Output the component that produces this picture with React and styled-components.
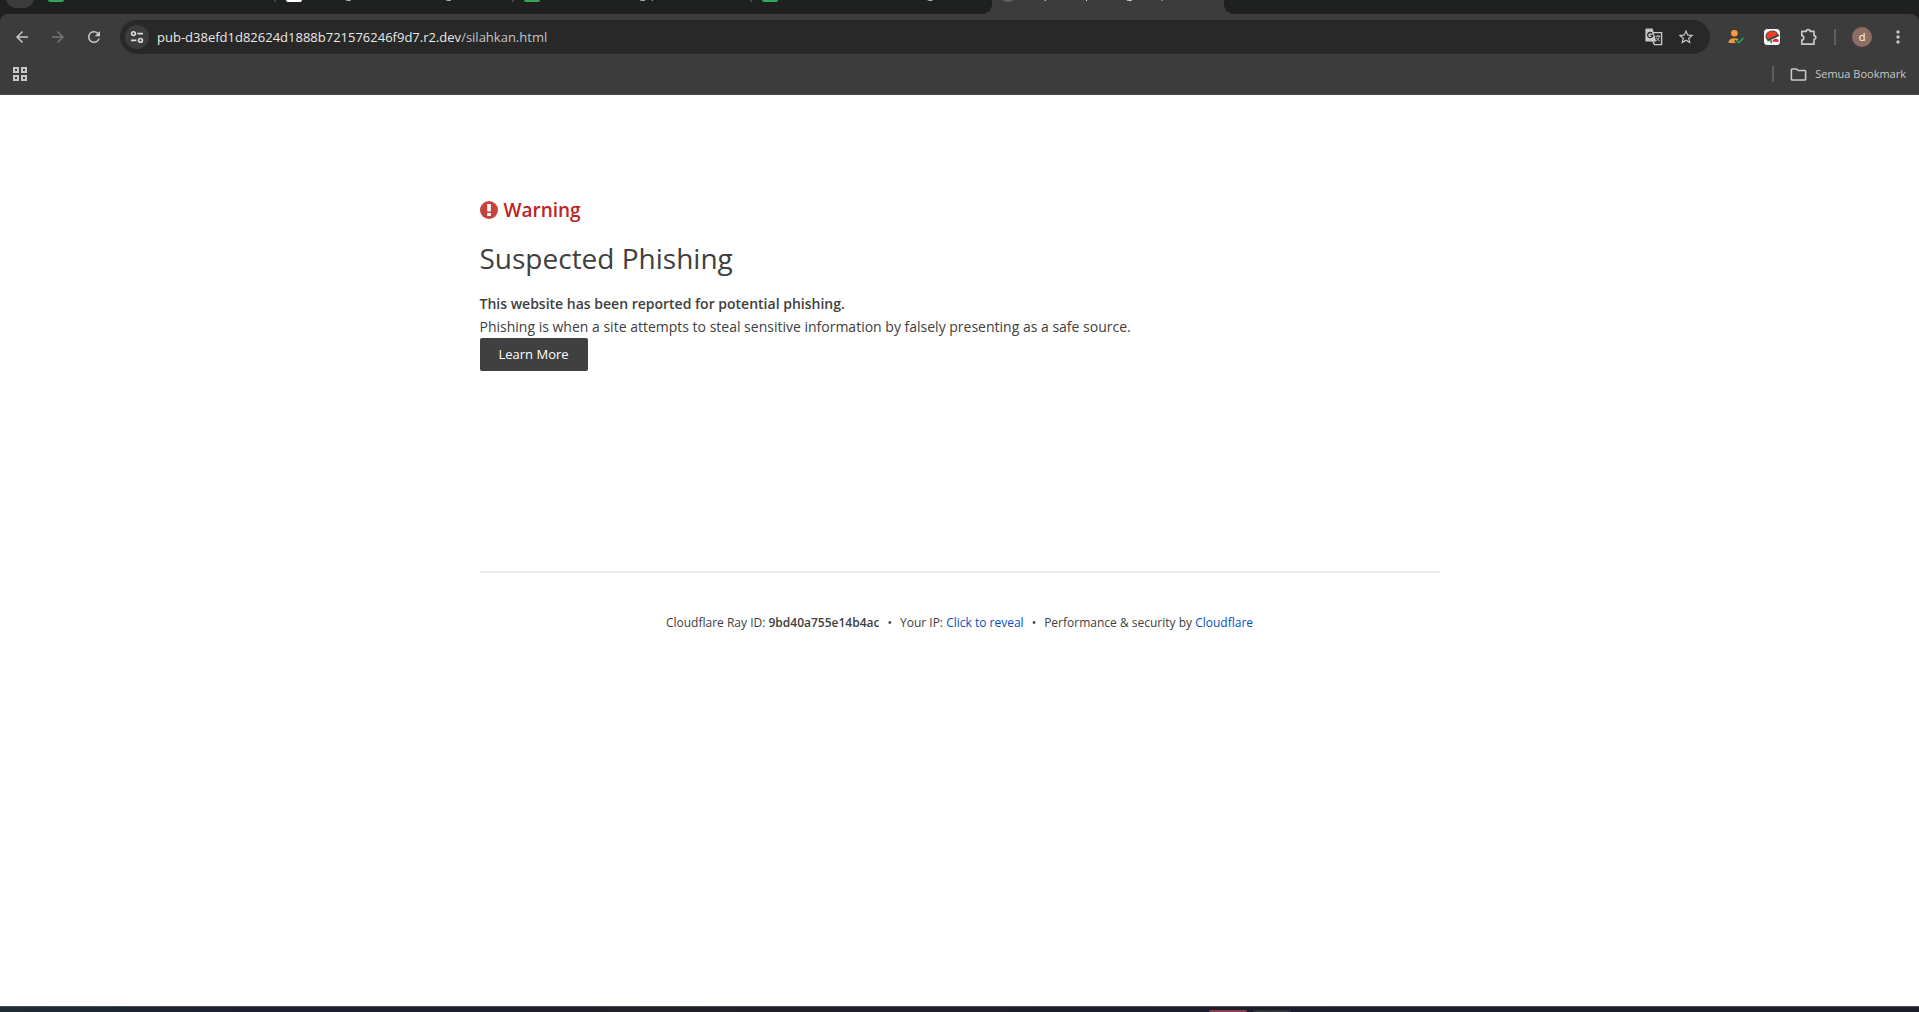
import React, { useState } from 'react';
import styled, { ThemeProvider, createGlobalStyle } from 'styled-components';
import {
  MdArrowBack,
  MdArrowForward,
  MdRefresh,
  MdStarBorder,
  MdOutlineFolder,
  MdMoreVert
} from 'react-icons/md';

const theme = {
  fonts: {
    ui: '"Open Sans", "Noto Sans", sans-serif'
  },
  colors: {
    frame: '#1f2120',
    toolbar: '#3c3c3c',
    field: '#282828',
    icon: '#c7c7c7',
    iconDim: '#757575',
    divider: '#5f5f5f',
    text: '#404040',
    danger: '#bd2426',
    link: '#0051c3',
    rule: '#ebebeb',
    white: '#ffffff'
  }
};

const GlobalStyle = createGlobalStyle`
  * {
    box-sizing: border-box;
  }

  body {
    margin: 0;
    background: #ffffff;
  }
`;

const Screen = styled.div`
  display: flex;
  flex-direction: column;
  height: 100vh;
  overflow: hidden;
  font-family: ${props => props.theme.fonts.ui};
`;

// Browser frame
const TabStrip = styled.div`
  display: flex;
  align-items: flex-end;
  height: 14px;
  flex-shrink: 0;
  padding-left: 6px;
  overflow: hidden;
  background: ${props => props.theme.colors.frame};
`;

const TabSearch = styled.button`
  width: 28px;
  height: 28px;
  flex-shrink: 0;
  margin: 0 6px 6px 0;
  padding: 0;
  border: none;
  border-radius: 10px;
  background: ${props => props.theme.colors.toolbar};
`;

const Tab = styled.button`
  position: relative;
  display: flex;
  align-items: flex-end;
  gap: 8px;
  width: ${props => props.$active ? 232 : 238}px;
  height: 28px;
  flex-shrink: 0;
  padding: 0 32px 12px 8px;
  border: none;
  background: ${props => props.$active ? props.theme.colors.toolbar : 'transparent'};
  color: ${props => props.$active ? '#e3e3e3' : '#c7c7c7'};
  font: 12px/16px ${props => props.theme.fonts.ui};
  text-align: left;
  white-space: nowrap;

  &::before,
  &::after {
    content: '';
    display: ${props => props.$active ? 'block' : 'none'};
    position: absolute;
    bottom: 0;
    width: 10px;
    height: 14px;
  }

  &::before {
    left: -10px;
    background: radial-gradient(circle at 0 4px, transparent 10px, ${props => props.theme.colors.toolbar} 10px);
    clip-path: inset(4px 0 0 0);
  }

  &::after {
    right: -10px;
    background: radial-gradient(circle at 10px 4px, transparent 10px, ${props => props.theme.colors.toolbar} 10px);
    clip-path: inset(4px 0 0 0);
  }
`;

const TabTitle = styled.span`
  flex: 1;
  overflow: hidden;
  mask-image: linear-gradient(90deg, #000 85%, transparent);
`;

const Favicon = styled.span`
  width: 16px;
  height: 16px;
  flex-shrink: 0;
  border-radius: ${props => props.$round ? '8px' : '2px'};
  background: ${props => props.$color};
`;

const TabDivider = styled.span`
  width: 2px;
  height: 16px;
  flex-shrink: 0;
  margin: 0 2px 12px -4px;
  background: #444646;
`;

const FrameBack = styled.div`
  flex-shrink: 0;
  background: ${props => props.theme.colors.frame};
`;

const Toolbars = styled.div`
  border-bottom: 1px solid #4a4a4a;
  border-radius: 8px 8px 0 0;
  background: ${props => props.theme.colors.toolbar};
`;

const Toolbar = styled.div`
  display: flex;
  align-items: center;
  height: 46px;
  padding: 0 3px 0 4px;
`;

const IconButton = styled.button`
  display: flex;
  align-items: center;
  justify-content: center;
  width: ${props => props.$width || 36}px;
  height: 32px;
  flex-shrink: 0;
  padding: 0;
  border: none;
  background: none;
  color: ${props => props.$dim ? props.theme.colors.iconDim : props.theme.colors.icon};
`;

const AddressBar = styled.div`
  display: flex;
  align-items: center;
  flex: 1;
  height: 34px;
  margin: 0 8px;
  padding: 0 8px 0 5px;
  border-radius: 17px;
  background: ${props => props.theme.colors.field};
`;

const SiteInfo = styled.button`
  display: flex;
  align-items: center;
  justify-content: center;
  width: 24px;
  height: 24px;
  flex-shrink: 0;
  padding: 0;
  border: none;
  border-radius: 12px;
  background: ${props => props.theme.colors.toolbar};
`;

const Url = styled.a`
  flex: 1;
  margin-left: 8px;
  color: #e8e8e8;
  font-size: 13px;
  line-height: 20px;
  text-decoration: none;

  span {
    color: #c4c4c4;
  }
`;

const Divider = styled.span`
  width: 2px;
  height: 16px;
  margin: 0 ${props => props.$gap}px;
  background: ${props => props.theme.colors.divider};
`;

const Avatar = styled.button`
  width: 20px;
  height: 20px;
  padding: 0;
  border: none;
  border-radius: 10px;
  background: #8d6e63;
  color: ${props => props.theme.colors.white};
  font: 11px/20px ${props => props.theme.fonts.ui};
`;

const BookmarkBar = styled.div`
  display: flex;
  align-items: center;
  justify-content: space-between;
  height: 34px;
  padding: 0 13px 6px 2px;
`;

const BookmarkGroup = styled.div`
  display: flex;
  align-items: center;
`;

const AllBookmarks = styled.button`
  display: flex;
  align-items: center;
  gap: 7px;
  padding: 0;
  border: none;
  background: none;
  color: ${props => props.theme.colors.icon};
  font: 11px/16px ${props => props.theme.fonts.ui};
`;

// Page
const Page = styled.main`
  flex: 1;
  overflow: hidden;
  padding: 97px 24px 0;
  background: ${props => props.theme.colors.white};
  color: ${props => props.theme.colors.text};
`;

const Content = styled.div`
  max-width: 960px;
  margin: 0 auto;
`;

const WarningTitle = styled.h1`
  display: flex;
  align-items: center;
  gap: 6px;
  margin: 0;
  color: ${props => props.theme.colors.danger};
  font-size: 19px;
  font-weight: 600;
  line-height: 36px;
`;

const Heading = styled.h2`
  margin: 12px 0 16px;
  font-size: 28px;
  font-weight: 400;
  line-height: 36px;
`;

const Message = styled.p`
  margin: 0;
  font-size: 14px;
  line-height: 23px;

  strong {
    font-weight: 600;
  }
`;

const LearnMore = styled.a`
  display: block;
  width: fit-content;
  padding: 0 19px;
  border-radius: 2px;
  background: ${props => props.theme.colors.text};
  color: ${props => props.theme.colors.white};
  font-size: 13px;
  line-height: 33px;
  text-decoration: none;
`;

const PageFooter = styled.footer`
  margin-top: 200px;
  padding-top: 40px;
  border-top: 2px solid ${props => props.theme.colors.rule};
  font-size: 12px;
  line-height: 20px;
  text-align: center;

  strong {
    font-weight: 600;
  }

  a {
    color: ${props => props.theme.colors.link};
    text-decoration: none;
  }
`;

const Bullet = styled.span`
  margin: 0 8px;
`;

const RevealButton = styled.button`
  padding: 0;
  border: none;
  background: none;
  color: ${props => props.theme.colors.link};
  font: inherit;
`;

// Desktop taskbar peeking out below the window
const Taskbar = styled.div`
  display: flex;
  align-items: flex-end;
  justify-content: center;
  gap: 6px;
  height: 6px;
  flex-shrink: 0;
  padding-left: 580px;
  border-top: 1px solid #4b4d52;
  background: linear-gradient(90deg, #1f2b33, #1d1e30 14%, #1e1e2c 26%, #221f26 34%, #1c1d2c 62%, #1d1e28);
`;

const TaskItem = styled.span`
  width: 38px;
  height: 2px;
  border-radius: 2px 2px 0 0;
  background: ${props => props.$color};
`;

const TuneIcon = () => (
  <svg width="14" height="14" viewBox="0 0 14 14" fill="none" stroke="#dcdcdc" strokeWidth="1.6">
    <circle cx="3.5" cy="3.6" r="1.9" />
    <path d="M7.4 3.6H13M1 10.4h5.4" />
    <circle cx="10.5" cy="10.4" r="1.9" />
  </svg>
);

const TranslateIcon = () => (
  <svg width="18" height="18" viewBox="0 0 18 18" fill="none">
    <path d="M8 4.6h8.6v12H9.4L7.8 13" stroke="#c7c7c7" strokeWidth="1.4" />
    <path d="M1.6.6h6l3.6 13H1.6a1.2 1.2 0 0 1-1.2-1.2V1.8A1.2 1.2 0 0 1 1.6.6Z" fill="#c7c7c7" />
    <path d="M7.2 5.4a2.6 2.6 0 1 0 .6 2H5.4" stroke="#282828" strokeWidth="1.3" />
    <path d="M10.4 8.2h5M12.8 7v1.2M14.4 8.4c-.4 1.9-1.5 3.3-3 4.3M11.4 9.6c.7 1.6 1.8 2.7 3.2 3.4" stroke="#c7c7c7" />
  </svg>
);

const PersonCheckIcon = () => (
  <svg width="18" height="16" viewBox="0 0 18 16" fill="none">
    <circle cx="7.4" cy="4.2" r="3.3" fill="#ff9c3f" />
    <path d="M1.4 14c0-3.2 2-4.8 6-4.8 1.8 0 3.2.4 4.2 1.1l-1.4 1.5-1.4-1.2-1.6 1.6 1.8 1.8Z" fill="#f3943e" />
    <path d="m9.4 11.4 2.5 2.4 4.6-5" stroke="#22a559" strokeWidth="1.5" />
  </svg>
);

const HelmetIcon = () => (
  <svg width="16" height="16" viewBox="0 0 16 16">
    <rect width="16" height="16" rx="3.5" fill="#fff" />
    <path d="M1.4 8.6C1.2 4.4 4.4 1.4 8.4 1.4c3.2 0 5.2 1.6 6 4.2l1 .6-1 1.2L6 11.2l-2.2 1.6-.6-1.6Z" fill="#3f454d" />
    <path d="M2.2 8.4C2.2 4.8 4.8 2.2 8.4 2.2c2.6 0 4.4 1.2 5.2 3.4L4.4 10Z" fill="#ef3f25" />
    <path d="m5.4 11.6 2.8-1.4v4.6c-1.5-.4-2.5-1.5-2.8-3.2Z" fill="#4c9b3e" />
    <path d="M8.6 12.8c.2-2 1.4-3 3.2-3s2.9 1.1 3.1 3Z" fill="#e3213b" />
  </svg>
);

const PuzzleIcon = () => (
  <svg width="18" height="18" viewBox="0 0 18 18" fill="none" stroke="#c7c7c7" strokeWidth="1.7" strokeLinejoin="round">
    <path d="M2.8 3.4h4.4c0-2.4 4-2.4 4 0H15v4.2c2.4 0 2.4 3.8 0 3.8v4.8H2.8v-4.1c2.6-.3 2.6-4.1 0-4.4Z" />
  </svg>
);

const AppsIcon = () => (
  <svg width="14" height="14" viewBox="0 0 14 14" fill="none" stroke="#c7c7c7" strokeWidth="2">
    <rect x="1" y="1" width="4" height="4" />
    <rect x="9" y="1" width="4" height="4" />
    <rect x="1" y="9" width="4" height="4" />
    <rect x="9" y="9" width="4" height="4" />
  </svg>
);

const AlertIcon = () => (
  <svg width="18" height="18" viewBox="0 0 18 18">
    <circle cx="9" cy="9" r="9" fill="#c5433d" />
    <path d="M7.2 3h3.6v7.4H7.2zM7.2 11.9h3.6v3.2H7.2z" fill="#fff" />
  </svg>
);

const tabs = [
  { title: 'Data Kontak Harian', color: '#34a853' },
  { title: 'Katalog Baru dan Hosting', color: '#ffffff' },
  { title: 'Data Baru Kolong | Sheets', color: '#34a853' },
  { title: 'Data Kontak Harian Ruang', color: '#34a853' },
  { title: 'Suspected phishing site | Cloudflare', color: '#5f6368', round: true, active: true }
];

function App() {
  const [ipShown, setIpShown] = useState(false);

  return (
    <ThemeProvider theme={theme}>
      <GlobalStyle />
      <Screen>
        <TabStrip>
          <TabSearch aria-label="Cari tab" />
          {tabs.map((tab, index) => (
            <React.Fragment key={index}>
              <Tab $active={tab.active}>
                <Favicon $color={tab.color} $round={tab.round} />
                <TabTitle>{tab.title}</TabTitle>
              </Tab>
              {index < 3 && <TabDivider />}
            </React.Fragment>
          ))}
        </TabStrip>

        <FrameBack>
          <Toolbars>
            <Toolbar>
              <IconButton aria-label="Kembali"><MdArrowBack size={18} /></IconButton>
              <IconButton aria-label="Maju" $dim><MdArrowForward size={18} /></IconButton>
              <IconButton aria-label="Muat ulang"><MdRefresh size={18} /></IconButton>
              <AddressBar>
                <SiteInfo aria-label="Info situs"><TuneIcon /></SiteInfo>
                <Url href="#">
                  pub-d38efd1d82624d1888b721576246f9d7.r2.dev<span>/silahkan.html</span>
                </Url>
                <IconButton aria-label="Terjemahkan" $width={32}><TranslateIcon /></IconButton>
                <IconButton aria-label="Bookmark" $width={32}><MdStarBorder size={18} /></IconButton>
              </AddressBar>
              <IconButton aria-label="Kontak"><PersonCheckIcon /></IconButton>
              <IconButton aria-label="Helm"><HelmetIcon /></IconButton>
              <IconButton aria-label="Ekstensi"><PuzzleIcon /></IconButton>
              <Divider $gap={8} />
              <IconButton as="div"><Avatar aria-label="Profil">d</Avatar></IconButton>
              <IconButton aria-label="Menu"><MdMoreVert size={20} /></IconButton>
            </Toolbar>
            <BookmarkBar>
              <IconButton aria-label="Aplikasi"><AppsIcon /></IconButton>
              <BookmarkGroup>
                <Divider $gap={15} />
                <AllBookmarks>
                  <MdOutlineFolder size={19} />
                  Semua Bookmark
                </AllBookmarks>
              </BookmarkGroup>
            </BookmarkBar>
          </Toolbars>
        </FrameBack>

        <Page>
          <Content>
            <WarningTitle><AlertIcon />Warning</WarningTitle>
            <Heading>Suspected Phishing</Heading>
            <Message><strong>This website has been reported for potential phishing.</strong></Message>
            <Message>Phishing is when a site attempts to steal sensitive information by falsely presenting as a safe source.</Message>
            <LearnMore href="#">Learn More</LearnMore>
            <PageFooter>
              Cloudflare Ray ID: <strong>9bd40a755e14b4ac</strong>
              <Bullet>•</Bullet>
              Your IP: <RevealButton onClick={() => setIpShown(true)}>{ipShown ? '127.0.0.1' : 'Click to reveal'}</RevealButton>
              <Bullet>•</Bullet>
              Performance &amp; security by <a href="#">Cloudflare</a>
            </PageFooter>
          </Content>
        </Page>

        <Taskbar>
          <TaskItem $color="#8a3d4a" />
          <TaskItem $color="#33343a" />
        </Taskbar>
      </Screen>
    </ThemeProvider>
  );
}

export default App;
